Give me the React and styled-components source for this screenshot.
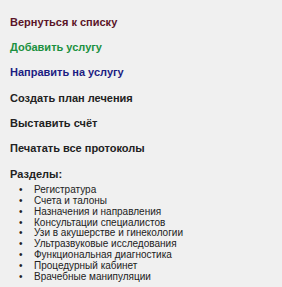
import React from 'react';
import styled, { createGlobalStyle } from 'styled-components';

const GlobalStyle = createGlobalStyle`
    body {
        margin: 0;
        background: #f0f0f0;
        font-family: "Liberation Sans", Arial, sans-serif;
    }
`
const Sidebar = styled.div`
    padding: 15px 10px 0;
    display: flex;
    flex-direction: column;
`
const ActionLink = styled.a`
    display: block;
    font-size: 11px;
    font-weight: bold;
    color: ${({color}) => color || '#222'};
    text-decoration: none;
    line-height: 14px;
    margin-bottom: 11.2px;
    cursor: pointer;
`
const SectionTitle = styled.div`
    font-size: 11px;
    font-weight: bold;
    color: #222;
    line-height: 14px;
    margin-top: 0.8px;
`
const SectionList = styled.ul`
    margin: 4px 0 0;
    padding-left: 24px;
    list-style: none;
    font-size: 10px;
    line-height: 10.875px;
    color: #222;

    li::before{
        content: '•';
        display: inline-block;
        width: 15px;
        margin-left: -15px;
    }
`

const actions = [
    { text: 'Вернуться к списку', color: '#5a1428' },
    { text: 'Добавить услугу', color: '#1b9040' },
    { text: 'Направить на услугу', color: '#1c1c82' },
    { text: 'Создать план лечения' },
    { text: 'Выставить счёт' },
    { text: 'Печатать все протоколы' },
]

const sections = [
    'Регистратура',
    'Счета и талоны',
    'Назначения и направления',
    'Консультации специалистов',
    'Узи в акушерстве и гинекологии',
    'Ультразвуковые исследования',
    'Функциональная диагностика',
    'Процедурный кабинет',
    'Врачебные манипуляции',
]

const App = () => {
    return (
        <>
            <GlobalStyle />
            <Sidebar>
                {actions.map(a => (
                    <ActionLink key={a.text} color={a.color}>{a.text}</ActionLink>
                ))}
                <SectionTitle>Разделы:</SectionTitle>
                <SectionList>
                    {sections.map(s => <li key={s}>{s}</li>)}
                </SectionList>
            </Sidebar>
        </>
    )
}

export default App;
